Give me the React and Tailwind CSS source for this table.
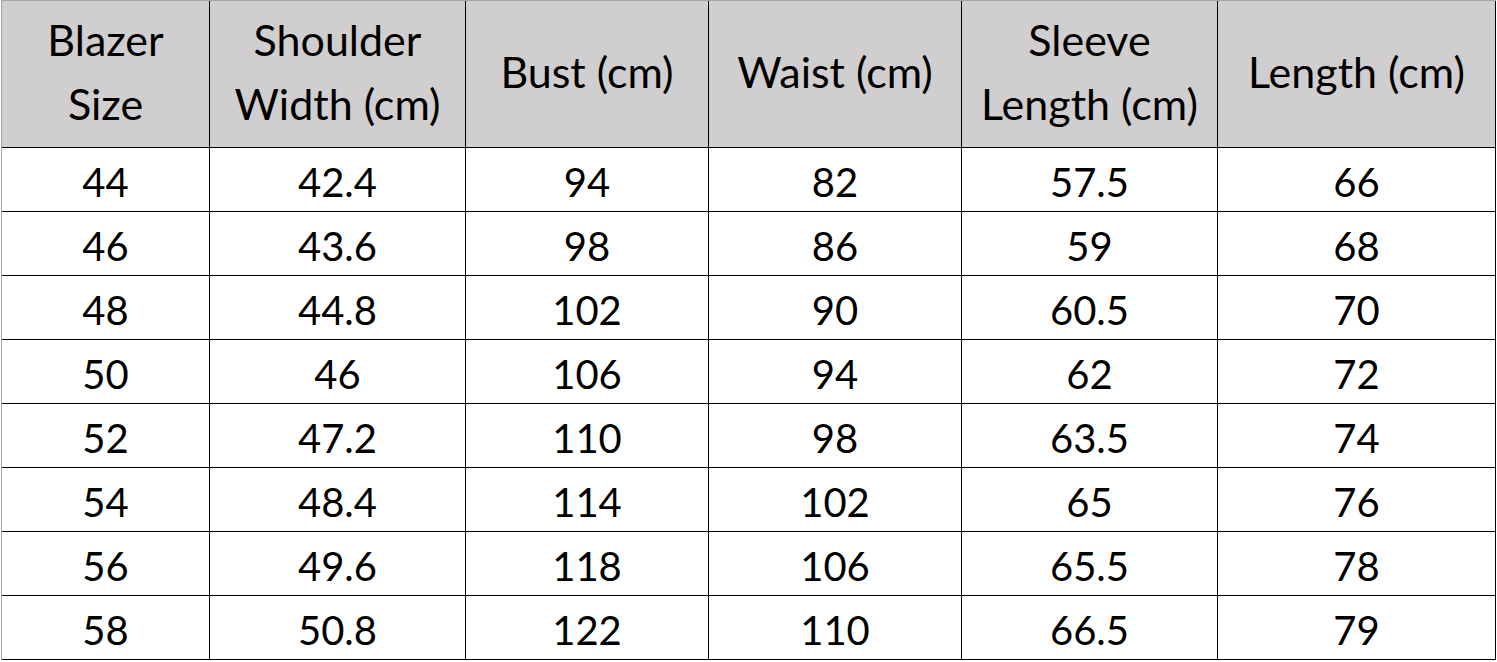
const columns = [
  { label: ['Blazer', 'Size'] },
  { label: ['Shoulder', 'Width (cm)'] },
  { label: ['Bust (cm)'] },
  { label: ['Waist (cm)'] },
  { label: ['Sleeve', 'Length (cm)'] },
  { label: ['Length (cm)'] },
];

const rows = [
  ['44', '42.4', '94', '82', '57.5', '66'],
  ['46', '43.6', '98', '86', '59', '68'],
  ['48', '44.8', '102', '90', '60.5', '70'],
  ['50', '46', '106', '94', '62', '72'],
  ['52', '47.2', '110', '98', '63.5', '74'],
  ['54', '48.4', '114', '102', '65', '76'],
  ['56', '49.6', '118', '106', '65.5', '78'],
  ['58', '50.8', '122', '110', '66.5', '79'],
];

export default function App() {
  return (
    <div className="w-[1497px] h-[662px] bg-white text-black font-['Lato','Liberation_Sans',sans-serif]">
      <div className="ml-px w-[1495px] border-l border-t border-[#a6a6a6]">
        <div className="grid grid-cols-[208px_256px_243px_253px_256px_278px]">
          {columns.map((c, i) => (
            <div
              key={i}
              className="h-[147px] bg-[#d0cece] border-r border-b border-black flex flex-col items-center justify-center text-[43px] leading-[64px] pb-1"
            >
              {c.label.map((l) => (
                <span key={l}>{l}</span>
              ))}
            </div>
          ))}
          {rows.map((r, ri) =>
            r.map((v, ci) => (
              <div
                key={ri + '-' + ci}
                className="h-16 border-r border-b border-black flex items-center justify-center text-[40px] pt-1"
              >
                {v}
              </div>
            ))
          )}
        </div>
      </div>
    </div>
  );
}
